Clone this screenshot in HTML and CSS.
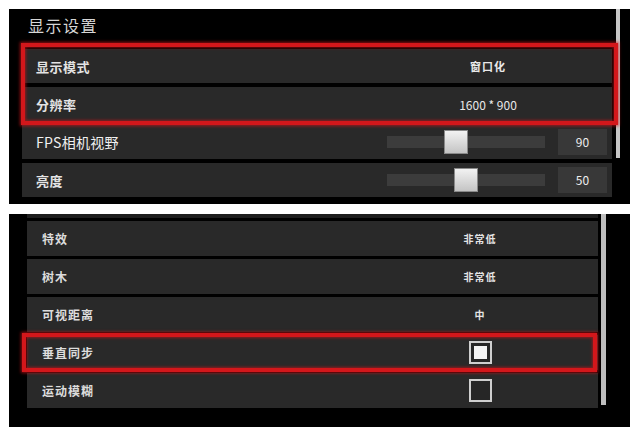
FILE: index.html
```html
<!DOCTYPE html>
<html lang="zh">
<head>
<meta charset="utf-8">
<link rel="stylesheet" href="styles.css">
</head>
<body>
<div class="page">
  <section class="panel panel-top">
    <div class="main">
      <div class="title">显示设置</div>
      <div class="list">
        <div class="row"><span class="label">显示模式</span><span class="value">窗口化</span></div>
        <div class="row"><span class="label">分辨率</span><span class="value num">1600 * 900</span></div>
        <div class="row"><span class="label big">FPS相机视野</span>
          <div class="slider"><div class="track"><div class="thumb" style="left:57px"></div></div><div class="box">90</div></div>
        </div>
        <div class="row"><span class="label">亮度</span>
          <div class="slider"><div class="track"><div class="thumb" style="left:67px"></div></div><div class="box">50</div></div>
        </div>
      </div>
    </div>
    <div class="scrollbar sb-top"></div>
    <div class="highlight hl-top"></div>
  </section>

  <section class="panel panel-bottom">
    <div class="list list-b">
      <div class="row-b partial"></div>
      <div class="row-b"><span class="label-b">特效</span><span class="value-b">非常低</span></div>
      <div class="row-b"><span class="label-b">树木</span><span class="value-b">非常低</span></div>
      <div class="row-b"><span class="label-b">可视距离</span><span class="value-b">中</span></div>
      <div class="row-b"><span class="label-b">垂直同步</span><span class="value-b"><span class="check checked"></span></span></div>
      <div class="row-b"><span class="label-b">运动模糊</span><span class="value-b"><span class="check"></span></span></div>
    </div>
    <div class="scrollbar sb-bottom"></div>
    <div class="highlight hl-bottom"></div>
  </section>
</div>
</body>
</html>
```

FILE: styles.css
```css
html, body {
  margin: 0;
  padding: 0;
  background: #ffffff;
  font-family: "Noto Sans CJK SC", "Noto Sans", sans-serif;
}

.page {
  padding: 9px 10px 0 9px;
  display: flex;
  flex-direction: column;
  gap: 10px;
}

.panel {
  position: relative;
  background: #000000;
  display: flex;
  align-items: flex-start;
}

.panel-top {
  height: 195px;
  padding-left: 13px;
  box-sizing: border-box;
}

.main {
  width: 590px;
  display: flex;
  flex-direction: column;
}

.title {
  height: 40px;
  line-height: 32px;
  padding-left: 6px;
  font-size: 16px;
  letter-spacing: 1.5px;
  color: #d6d6d6;
}

.list {
  display: flex;
  flex-direction: column;
  gap: 4px;
}

.row {
  height: 34px;
  background: #292929;
  display: flex;
  align-items: center;
  padding-left: 14px;
}

.label {
  flex: 1;
  font-size: 13px;
  font-weight: 700;
  color: #e4e4e4;
  letter-spacing: 0.5px;
}

.label.big {
  font-size: 14px;
  font-weight: 400;
  color: #f0f0f0;
  letter-spacing: 0.3px;
}

.value {
  width: 200px;
  margin-right: 24px;
  text-align: center;
  font-size: 11px;
  font-weight: 700;
  color: #e8e8e8;
  letter-spacing: 1px;
}

.value.num {
  font-size: 12px;
  font-weight: 400;
  letter-spacing: 0;
}

.slider {
  display: flex;
  align-items: center;
  gap: 13px;
  margin-right: 5px;
}

.track {
  position: relative;
  width: 158px;
  height: 12px;
  background: #3c3c3c;
}

.thumb {
  position: absolute;
  top: -6px;
  width: 22px;
  height: 22px;
  background: linear-gradient(#f2f2f2, #c4c4c4);
  border: 1px solid #8a8a8a;
  box-sizing: content-box;
}

.box {
  width: 49px;
  height: 26px;
  background: #383838;
  color: #eeeeee;
  font-size: 12px;
  line-height: 26px;
  text-align: center;
}

.scrollbar {
  background: #c6c6c6;
}

.sb-top {
  width: 4px;
  height: 149px;
  margin-left: 4px;
}

.highlight {
  position: absolute;
  border: 4px solid #d3171b;
  box-shadow: 0 0 3px 1px rgba(210, 20, 25, 0.7), inset 0 0 3px 1px rgba(210, 20, 25, 0.6);
  box-sizing: border-box;
}

.hl-top {
  left: 12px;
  top: 34px;
  width: 597px;
  height: 82px;
}

.panel-bottom {
  height: 213px;
  padding-left: 18px;
  box-sizing: border-box;
}

.list-b {
  width: 571px;
  display: flex;
  flex-direction: column;
  gap: 3px;
}

.row-b {
  height: 35px;
  background: #292929;
  display: flex;
  align-items: center;
  padding-left: 15px;
}

.row-b.partial {
  height: 4px;
  background: #1e1e1e;
}

.label-b {
  flex: 1;
  font-size: 12px;
  font-weight: 700;
  color: #dcdcdc;
  letter-spacing: 1px;
}

.value-b {
  width: 200px;
  margin-right: 18px;
  display: flex;
  justify-content: center;
  font-size: 10px;
  font-weight: 700;
  color: #e4e4e4;
  letter-spacing: 1px;
}

.check {
  width: 23px;
  height: 23px;
  border: 2px solid #cfcfcf;
  box-sizing: border-box;
  background: #262626;
  position: relative;
}

.check.checked::after {
  content: "";
  position: absolute;
  left: 3px;
  top: 3px;
  right: 3px;
  bottom: 3px;
  background: #f4f4f4;
}

.sb-bottom {
  width: 5px;
  height: 191px;
  margin-left: 3px;
  background: #bdbdbd;
}

.hl-bottom {
  left: 13px;
  top: 119px;
  width: 575px;
  height: 39px;
}
```
